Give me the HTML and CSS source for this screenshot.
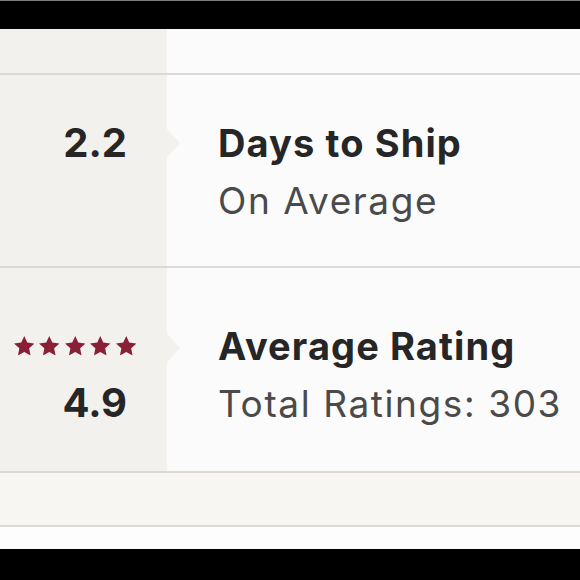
FILE: index.html
```html
<!DOCTYPE html>
<html lang="en">
<head>
<meta charset="utf-8">
<title>Shop stats</title>
<link rel="stylesheet" href="styles.css">
</head>
<body>
<svg class="defs" width="0" height="0" aria-hidden="true">
  <symbol id="star" viewBox="0 0 20 19">
    <polygon points="10,0 12.94,6.45 19.99,7.26 14.76,12.05 16.17,18.99 10,15.5 3.83,18.99 5.24,12.05 0.01,7.26 7.06,6.45"/>
  </symbol>
</svg>
<div class="bar bar-top"></div>
<div class="stats">
  <div class="row row-head">
    <div class="cell-left"></div>
    <div class="cell-right"></div>
  </div>
  <div class="row row-ship">
    <div class="cell-left has-notch">
      <div class="num line1">2.2</div>
    </div>
    <div class="cell-right">
      <div class="title">Days to Ship</div>
      <div class="sub">On Average</div>
    </div>
  </div>
  <div class="row row-rating">
    <div class="cell-left has-notch">
      <div class="stars line1">
        <svg class="star"><use href="#star"/></svg>
        <svg class="star"><use href="#star"/></svg>
        <svg class="star"><use href="#star"/></svg>
        <svg class="star"><use href="#star"/></svg>
        <svg class="star"><use href="#star"/></svg>
      </div>
      <div class="num line2">4.9</div>
    </div>
    <div class="cell-right">
      <div class="title">Average Rating</div>
      <div class="sub">Total Ratings: 303</div>
    </div>
  </div>
  <div class="band"></div>
  <div class="gap"></div>
</div>
<div class="bar bar-bottom"></div>
</body>
</html>
```
FILE: styles.css
```css
* { box-sizing: border-box; }
html, body { margin: 0; padding: 0; }
body {
  width: 580px;
  height: 580px;
  overflow: hidden;
  background: #fdfdfd;
  font-family: Inter, "Liberation Sans", sans-serif;
  color: #262626;
}
.defs { position: absolute; width: 0; height: 0; overflow: hidden; }
.bar { background: #000; }
.bar-top { height: 29px; border-top: 1px solid #7c7c7c; }
.bar-bottom { height: 31px; }

.row {
  display: grid;
  grid-template-columns: 167px 1fr;
  border-bottom: 2px solid #ddd7d6;
}
.cell-left { background: #f3f1ee; position: relative; }
.cell-right { background: #fbfbfb; padding-left: 51px; white-space: nowrap; }

.row-head { height: 46px; }
.row-ship { height: 193px; }
.row-rating { height: 205px; }

.row-ship .cell-left, .row-ship .cell-right { padding-top: 45px; }
.row-rating .cell-left, .row-rating .cell-right { padding-top: 55px; }

.has-notch::after {
  content: "";
  position: absolute;
  right: -13px;
  width: 0;
  height: 0;
  border-left: 13px solid #f3f1ee;
  border-top: 14px solid transparent;
  border-bottom: 14px solid transparent;
}
.row-ship .has-notch::after { top: 54px; }
.row-rating .has-notch::after { top: 66px; }

.title {
  font-size: 38px;
  line-height: 46px;
  font-weight: 700;
  letter-spacing: 1.1px;
  color: #262626;
}
.sub {
  margin-top: 12px;
  font-size: 37px;
  line-height: 46px;
  font-weight: 400;
  letter-spacing: 1.6px;
  color: #4a4a4a;
}

.num {
  font-size: 40px;
  line-height: 46px;
  font-weight: 700;
  text-align: right;
  padding-right: 40px;
  color: #262626;
}
.num.line2 { margin-top: 11px; }

.stars {
  height: 46px;
  display: flex;
  align-items: center;
  justify-content: flex-end;
  gap: 5px;
  padding-right: 31px;
}
.star { width: 20.5px; height: 19.5px; fill: #8a2035; display: block; }

.band {
  height: 54px;
  background: #f7f6f2;
  border-bottom: 2px solid #ddd7d6;
}
.gap { height: 22px; background: #fdfdfd; }
```
